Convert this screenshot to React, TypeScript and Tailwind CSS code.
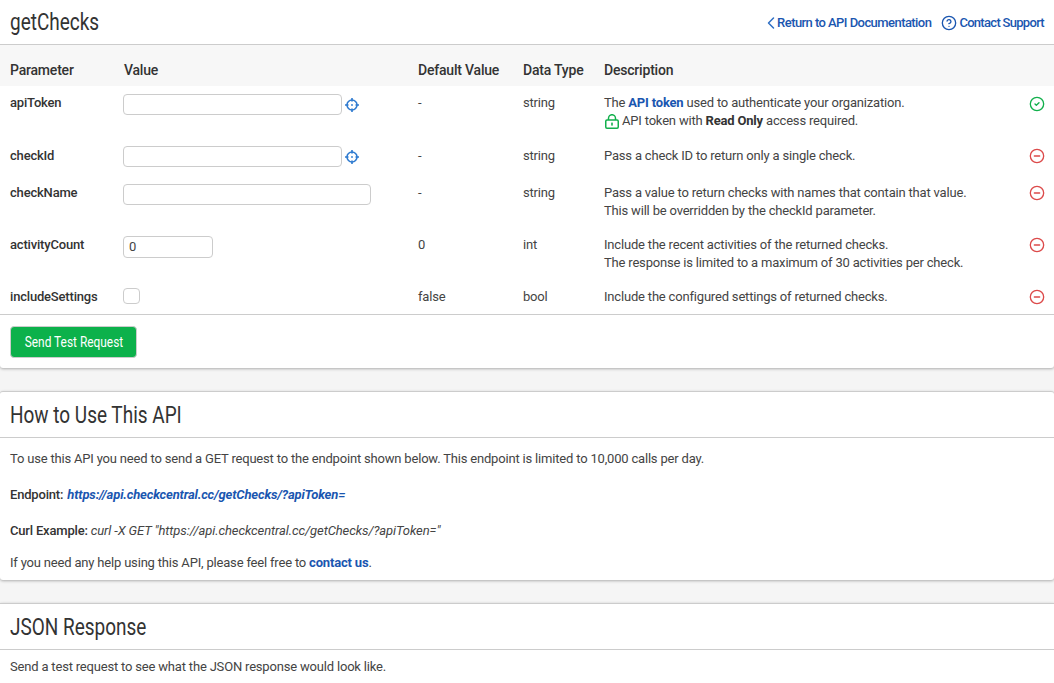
import { ChevronLeft, CircleHelp, CircleCheck, CircleMinus } from 'lucide-react'

function Crosshair() {
  return (
    <svg width="14" height="14" viewBox="0 0 14 14" fill="none" className="text-[#2f7bd0] ml-[3px] shrink-0">
      <circle cx="7" cy="7" r="5" stroke="currentColor" strokeWidth="1.6" />
      <path d="M7 0v3.5M7 10.5V14M0 7h3.5M10.5 7H14" stroke="currentColor" strokeWidth="1.6" />
      <circle cx="7" cy="7" r="0.9" fill="currentColor" />
    </svg>
  )
}

function LockIcon() {
  return (
    <svg width="14" height="15" viewBox="0 0 14 15" fill="none" className="text-[#12b04c] ml-[1px] mr-[3px] shrink-0">
      <rect x="0.75" y="6" width="12.5" height="8.25" rx="1.2" stroke="currentColor" strokeWidth="1.5" />
      <path d="M3.5 6V4.2a3.5 3.5 0 0 1 7 0V6" stroke="currentColor" strokeWidth="1.5" />
      <rect x="6.2" y="8.6" width="1.6" height="3" fill="currentColor" />
    </svg>
  )
}

function TextInput({ width }: { width: string }) {
  return <input className={`${width} h-[21px] -ml-px rounded-[4px] border border-[#ccc] bg-white px-2 text-[13px] outline-none`} />
}

function Status({ ok }: { ok?: boolean }) {
  return ok
    ? <CircleCheck size={16} strokeWidth={2} className="text-[#12b04c] mt-[1px] -ml-px" />
    : <CircleMinus size={16} strokeWidth={2} className="text-[#dc4a4a] mt-[1px] -ml-px" />
}

const rowCls = 'grid grid-cols-[114px_294px_105px_81px_1fr_15px] pl-[10px] pr-[9px]'

function Row({ name, value, def, type, status, className, pad = 'pt-[9px]', children }: {
  name: string; value: React.ReactNode; def: string; type: string; status?: boolean; className: string; pad?: string; children: React.ReactNode
}) {
  return (
    <div className={`${rowCls} ${className}`}>
      <div className={`font-medium text-[#333] ${pad}`}>{name}</div>
      <div className="pt-[8px]">{value}</div>
      <div className={pad}>{def}</div>
      <div className={pad}>{type}</div>
      <div className={`${pad} leading-[18px]`}>{children}</div>
      <div className="pt-[9px]"><Status ok={status} /></div>
    </div>
  )
}

function CardTitle({ children }: { children: string }) {
  return (
    <div className="h-[46px] border-b border-[#ccc] pl-[10px] pt-[1px] flex items-center">
      <h2 className="text-[23px] leading-none tracking-normal text-[#333] origin-left scale-x-[0.825] whitespace-nowrap font-normal">{children}</h2>
    </div>
  )
}

export default function App() {
  return (
    <div className="h-[683px] overflow-hidden bg-[#f5f5f5] text-[13px] leading-[18px] tracking-[-0.185px] text-[#444] font-['Roboto','Liberation_Sans',sans-serif]">
      <div className="bg-white shadow-[0_1px_3px_rgba(0,0,0,0.3)] rounded-b-[3px]">
        <div className="h-[45px] border-b border-[#ccc] flex items-center justify-between pl-[10px] pr-[10px]">
          <h1 className="text-[23px] leading-none text-[#333] origin-left scale-x-[0.825] font-normal tracking-normal">getChecks</h1>
          <div className="flex items-center pt-[1px] text-[#1a56b0] font-medium text-[13px] tracking-[-0.56px]">
            <ChevronLeft size={20} strokeWidth={1.8} className="text-[#2f6fc4] -mr-[3.5px]" />
            <span>Return to API Documentation</span>
            <CircleHelp size={16} strokeWidth={2} className="ml-[10px] mr-[2px]" />
            <span className="tracking-[-0.7px]">Contact Support</span>
          </div>
        </div>

        <div className={`${rowCls} h-[41px] pt-[8px] bg-[#f7f7f7] items-center font-medium text-[14px] tracking-[-0.2px] text-[#333]`}>
          <div>Parameter</div>
          <div>Value</div>
          <div>Default Value</div>
          <div>Data Type</div>
          <div>Description</div>
          <div />
        </div>

        <Row className="h-[52px]" pad="pt-[8px]" name="apiToken" def="-" type="string" status
          value={<div className="flex items-center"><TextInput width="w-[219px]" /><Crosshair /></div>}>
          <div>The <span className="font-bold text-[#1a56b0]">API token</span> used to authenticate your organization.</div>
          <div className="flex items-center">
            <LockIcon />
            <span>API token with <b className="font-bold text-[#333]">Read Only</b> access required.</span>
          </div>
        </Row>
        <Row className="h-[37px]" name="checkId" def="-" type="string"
          value={<div className="flex items-center"><TextInput width="w-[219px]" /><Crosshair /></div>}>
          Pass a check ID to return only a single check.
        </Row>
        <Row className="h-[52px]" name="checkName" def="-" type="string"
          value={<div className="pt-[1px]"><TextInput width="w-[248px]" /></div>}>
          <div>Pass a value to return checks with names that contain that value.</div>
          <div>This will be overridden by the checkId parameter.</div>
        </Row>
        <Row className="h-[52px]" name="activityCount" def="0" type="int"
          value={<div className="pt-[1px]"><input defaultValue="0" className="w-[90px] h-[22px] -ml-px rounded-[4px] border border-[#ccc] bg-white pl-[5px] pb-[1px] text-[13px] text-[#444] outline-none" /></div>}>
          <div>Include the recent activities of the returned checks.</div>
          <div>The response is limited to a maximum of 30 activities per check.</div>
        </Row>
        <Row className="h-[35px]" name="includeSettings" def="false" type="bool"
          value={<div className="pt-[1px]"><div className="w-[17px] h-[16px] -ml-px rounded-[4px] border border-[#ccc] bg-white" /></div>}>
          Include the configured settings of returned checks.
        </Row>

        <div className="border-t border-[#ccc] h-[54px] pl-[10px] pt-[11px]">
          <button className="w-[127px] h-[32px] rounded-[4px] border border-[#ccc] bg-[#0cb14b] text-white text-[14px] tracking-normal flex items-center justify-center">
            <span className="scale-x-[0.85] whitespace-nowrap">Send Test Request</span>
          </button>
        </div>
      </div>

      <div className="mt-[23px] bg-white border-t border-[#ccc] shadow-[0_1px_3px_rgba(0,0,0,0.3)] rounded-[3px]">
        <CardTitle>How to Use This API</CardTitle>
        <div className="h-[142px] px-[10px] pt-[12px]">
          <p>To use this API you need to send a GET request to the endpoint shown below. This endpoint is limited to 10,000 calls per day.</p>
          <p className="mt-[18px]"><b className="font-medium text-[#333]">Endpoint: </b><i className="font-bold text-[#1a56b0] tracking-[-0.16px] ml-px">https://api.checkcentral.cc/getChecks/?apiToken=</i></p>
          <p className="mt-[18px]"><b className="font-medium text-[#333]">Curl Example: </b><i className="tracking-[-0.1px]">curl -X GET "https://api.checkcentral.cc/getChecks/?apiToken="</i></p>
          <p className="mt-[14px]">If you need any help using this API, please feel free to <a className="font-bold text-[#1a56b0]">contact us</a>.</p>
        </div>
      </div>

      <div className="mt-[23px] bg-white border-t border-[#ccc] shadow-[0_1px_3px_rgba(0,0,0,0.3)] h-[100px]">
        <CardTitle>JSON Response</CardTitle>
        <p className="px-[10px] pt-[8px]">Send a test request to see what the JSON response would look like.</p>
      </div>
    </div>
  )
}
